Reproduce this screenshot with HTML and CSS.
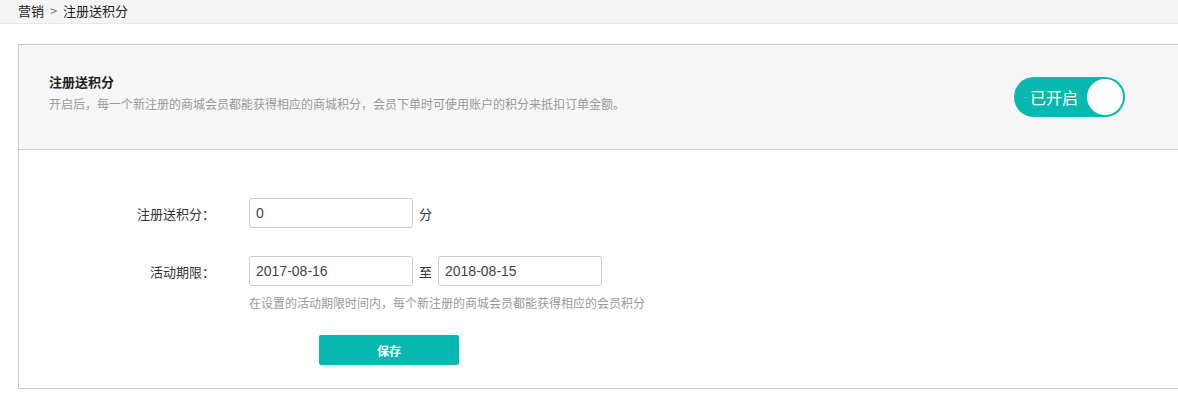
FILE: index.html
```html
<!DOCTYPE html>
<html lang="zh-CN">
<head>
  <meta charset="UTF-8">
  <meta name="viewport" content="width=device-width, initial-scale=1.0">
  <title>注册送积分</title>
  <link rel="stylesheet" href="styles.css">
</head>
<body>
  <div class="crumbs">
    <span>营销</span>
    <span class="sep">&gt;</span>
    <span>注册送积分</span>
  </div>

  <div class="panel">
    <div class="panel-head">
      <div class="intro">
        <h3>注册送积分</h3>
        <p>开启后，每一个新注册的商城会员都能获得相应的商城积分，会员下单时可使用账户的积分来抵扣订单金额。</p>
      </div>
      <div class="switch on">
        <span class="switch-text">已开启</span>
        <span class="knob"></span>
      </div>
    </div>

    <div class="panel-body">
      <div class="row">
        <label class="row-label">注册送积分：</label>
        <input class="field" type="text" value="0">
        <span class="unit">分</span>
      </div>

      <div class="row row-date">
        <label class="row-label">活动期限：</label>
        <input class="field" type="text" value="2017-08-16">
        <span class="unit">至</span>
        <input class="field" type="text" value="2018-08-15">
      </div>
      <div class="hint">在设置的活动期限时间内，每个新注册的商城会员都能获得相应的会员积分</div>

      <button class="save">保存</button>
    </div>
  </div>
</body>
</html>
```

FILE: styles.css
```css
html {
  overflow: hidden;
}
body {
  margin: 0;
  font-family: "Noto Sans CJK SC", "Liberation Sans", sans-serif;
  font-size: 13px;
  color: #333;
  background: #fff;
}
.crumbs {
  height: 24px;
  line-height: 22px;
  padding-left: 18px;
  background: #f5f5f5;
  border-bottom: 1px solid #e8e8e8;
  box-sizing: border-box;
  color: #222;
}
.crumbs .sep {
  color: #777;
  margin: 0 3px;
}
.panel {
  margin: 20px 0 0 18px;
  width: 1200px;
  border: 1px solid #ccc;
}
.panel-head {
  display: flex;
  align-items: center;
  height: 104px;
  padding: 0 0 0 30px;
  background: #f6f6f6;
  border-bottom: 1px solid #ccc;
}
.intro {
  flex: 1;
  padding-bottom: 10px;
}
.intro h3 {
  margin: 0;
  font-size: 13px;
  font-weight: bold;
  line-height: 18px;
  color: #222;
}
.intro p {
  margin: 5px 0 0;
  font-size: 12px;
  line-height: 16px;
  color: #999;
}
.switch {
  display: flex;
  align-items: center;
  justify-content: space-between;
  width: 111px;
  height: 40px;
  margin-right: 94px;
  padding: 0 2px 0 16px;
  box-sizing: border-box;
  border-radius: 20px;
  background: #05b8b0;
  color: #fff;
}
.switch-text {
  font-size: 16px;
  line-height: 20px;
}
.knob {
  width: 36px;
  height: 36px;
  border-radius: 50%;
  background: #fff;
}
.panel-body {
  padding: 48px 0 23px;
}
.row {
  display: flex;
  align-items: center;
  height: 30px;
}
.row-date {
  margin-top: 28px;
}
.row-label {
  width: 196px;
  text-align: right;
  padding-right: 34px;
  box-sizing: content-box;
  color: #333;
}
.field {
  width: 164px;
  height: 30px;
  box-sizing: border-box;
  padding: 0 6px;
  border: 1px solid #ccc;
  border-radius: 3px;
  font-family: "Liberation Sans", "Noto Sans CJK SC", sans-serif;
  font-size: 14px;
  color: #444;
}
.unit {
  margin: 0 6px;
  color: #333;
}
.hint {
  margin: 9px 0 0 230px;
  font-size: 12px;
  line-height: 16px;
  color: #999;
}
.save {
  display: block;
  width: 140px;
  height: 30px;
  margin: 24px 0 0 300px;
  border: none;
  border-radius: 2px;
  background: #05b8b0;
  color: #fff;
  font-family: "Noto Sans CJK SC", sans-serif;
  font-size: 12px;
  font-weight: bold;
  cursor: pointer;
}
```
